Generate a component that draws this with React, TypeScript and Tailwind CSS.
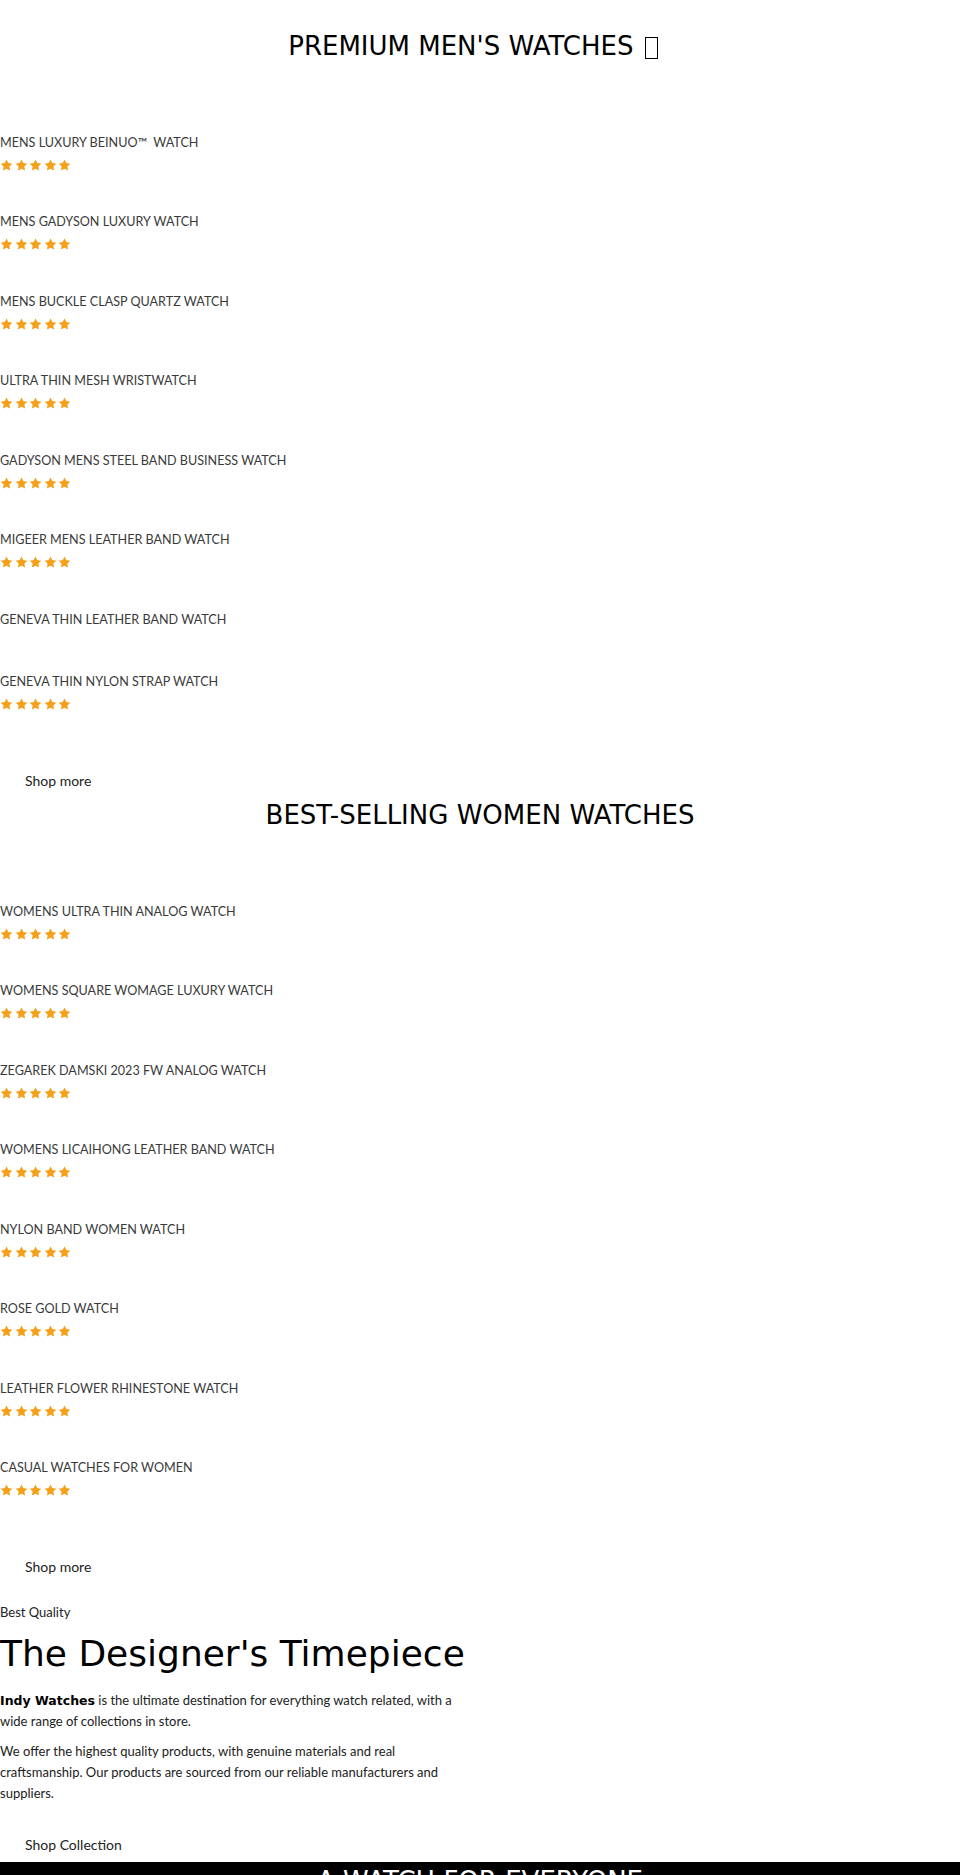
import React from "react";

const menWatches: { name: string; rated: boolean }[] = [
  { name: "MENS LUXURY BEINUO™  WATCH", rated: true },
  { name: "MENS GADYSON LUXURY WATCH", rated: true },
  { name: "MENS BUCKLE CLASP QUARTZ WATCH", rated: true },
  { name: "ULTRA THIN MESH WRISTWATCH", rated: true },
  { name: "GADYSON MENS STEEL BAND BUSINESS WATCH", rated: true },
  { name: "MIGEER MENS LEATHER BAND WATCH", rated: true },
  { name: "GENEVA THIN LEATHER BAND WATCH", rated: false },
  { name: "GENEVA THIN NYLON STRAP WATCH", rated: true },
];

const womenWatches: { name: string; rated: boolean }[] = [
  { name: "WOMENS ULTRA THIN ANALOG WATCH", rated: true },
  { name: "WOMENS SQUARE WOMAGE LUXURY WATCH", rated: true },
  { name: "ZEGAREK DAMSKI 2023 FW ANALOG WATCH", rated: true },
  { name: "WOMENS LICAIHONG LEATHER BAND WATCH", rated: true },
  { name: "NYLON BAND WOMEN WATCH", rated: true },
  { name: "ROSE GOLD WATCH", rated: true },
  { name: "LEATHER FLOWER RHINESTONE WATCH", rated: true },
  { name: "CASUAL WATCHES FOR WOMEN", rated: true },
];

function Star() {
  return (
    <svg viewBox="0 0 24 23" className="w-[13px] h-[12px]" fill="#f5a01a">
      <path d="M12 0.8l3.4 7.1 7.8 1.1-5.7 5.5 1.4 7.7L12 18.5l-6.9 3.7 1.4-7.7L0.8 9l7.8-1.1z" />
    </svg>
  );
}

function Rating() {
  return (
    <div className="h-[17.5px] pt-[6px] flex gap-[1.5px]">
      <Star />
      <Star />
      <Star />
      <Star />
      <Star />
    </div>
  );
}

function ProductList({ items }: { items: { name: string; rated: boolean }[] }) {
  return (
    <ul className="mt-[24.5px]">
      {items.map((item) => (
        <li key={item.name} className="pt-[42px]">
          <a className="block text-[12.6px] leading-[20px] text-[#3a3a3a] font-['Lato',sans-serif] whitespace-pre">
            {item.name}
          </a>
          {item.rated && <Rating />}
        </li>
      ))}
    </ul>
  );
}

function ShopButton({ label, className, pad }: { label: string; className: string; pad: string }) {
  return (
    <div className={className}>
      <a
        className={`inline-block pl-[25px] pr-6 text-[14px] leading-[20px] text-[#222] font-['Lato',sans-serif] ${pad}`}
      >
        {label}
      </a>
    </div>
  );
}

export default function App() {
  return (
    <div className="bg-white text-black min-h-[1875px]">
      <section className="pt-[27px]">
        <h2 className="text-center pr-[14px] text-[26px] leading-normal font-['DejaVu_Sans',sans-serif]">
          PREMIUM MEN'S WATCHES{" "}
          <span className="inline-block ml-[3px] w-[13px] h-[22px] border-[1.5px] border-black align-[-4px]" />
        </h2>
        <ProductList items={menWatches} />
        <ShopButton label="Shop more" className="mt-[52px]" pad="pt-[10px] pb-[5px]" />
      </section>

      <section>
        <h2 className="text-center text-[26px] leading-normal font-['DejaVu_Sans',sans-serif]">
          BEST-SELLING WOMEN WATCHES
        </h2>
        <ProductList items={womenWatches} />
        <ShopButton label="Shop more" className="mt-[51px]" pad="pt-[10px] pb-[5px]" />
      </section>

      <section className="w-[480px] mt-[20px]">
        <p className="text-[13px] leading-[20px] text-[#222] font-['Lato',sans-serif]">Best Quality</p>
        <h2 className="mt-[5px] text-[36px] leading-normal font-['DejaVu_Sans',sans-serif]">
          The Designer's Timepiece
        </h2>
        <div className="mt-[9.5px] text-[13px] leading-[21px] text-[#222] font-['Lato',sans-serif]">
          <p>
            <strong className="font-bold font-['DejaVu_Sans',sans-serif] text-[12.5px] text-black">
              Indy Watches
            </strong>{" "}
            is the ultimate destination for everything watch related, with a wide range of collections in store.
          </p>
          <p className="mt-[9px]">
            We offer the highest quality products, with genuine materials and real craftsmanship. Our products are
            sourced from our reliable manufacturers and suppliers.
          </p>
        </div>
        <ShopButton label="Shop Collection" className="mt-[20.5px]" pad="pt-[10px] pb-[7.5px]" />
      </section>

      <section className="bg-black h-[220px]">
        <h2 className="text-center text-white text-[26px] leading-normal font-['DejaVu_Sans',sans-serif]">
          A WATCH FOR EVERYONE
        </h2>
      </section>
    </div>
  );
}
